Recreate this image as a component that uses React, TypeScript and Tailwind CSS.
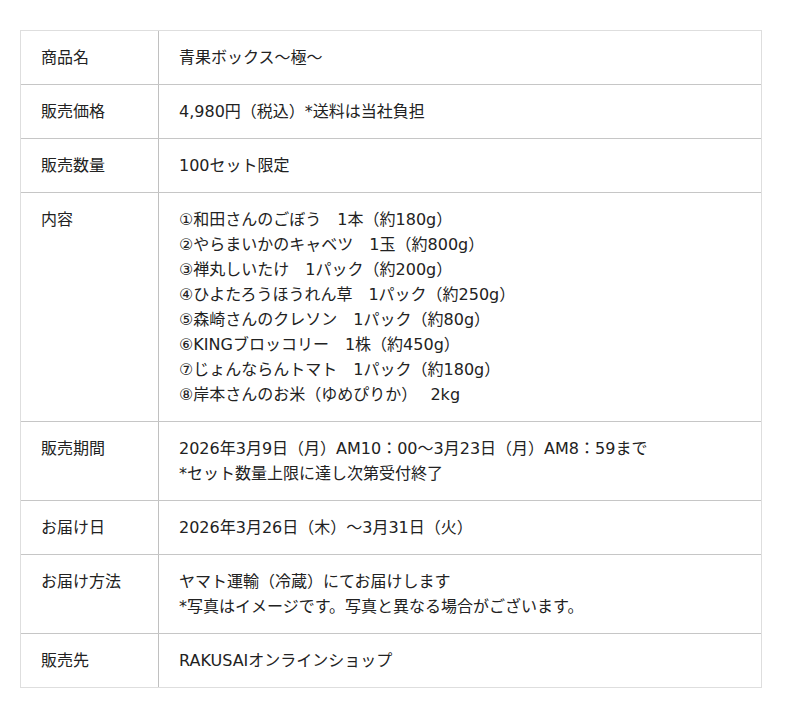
import React from "react";

type Row = { label: string; lines: string[] };

const rows: Row[] = [
  { label: "商品名", lines: ["青果ボックス〜極〜"] },
  { label: "販売価格", lines: ["4,980円（税込）*送料は当社負担"] },
  { label: "販売数量", lines: ["100セット限定"] },
  {
    label: "内容",
    lines: [
      "①和田さんのごぼう　1本（約180g）",
      "②やらまいかのキャベツ　1玉（約800g）",
      "③禅丸しいたけ　1パック（約200g）",
      "④ひよたろうほうれん草　1パック（約250g）",
      "⑤森崎さんのクレソン　1パック（約80g）",
      "⑥KINGブロッコリー　1株（約450g）",
      "⑦じょんならんトマト　1パック（約180g）",
      "⑧岸本さんのお米（ゆめぴりか）　 2kg",
    ],
  },
  {
    label: "販売期間",
    lines: [
      "2026年3月9日（月）AM10：00〜3月23日（月）AM8：59まで",
      "*セット数量上限に達し次第受付終了",
    ],
  },
  { label: "お届け日", lines: ["2026年3月26日（木）〜3月31日（火）"] },
  {
    label: "お届け方法",
    lines: [
      "ヤマト運輸（冷蔵）にてお届けします",
      "*写真はイメージです。写真と異なる場合がございます。",
    ],
  },
  { label: "販売先", lines: ["RAKUSAIオンラインショップ"] },
];

export default function App() {
  return (
    <div
      className="min-h-[718px] bg-white pt-[30px] pl-[20px] text-[16px] leading-[25px] text-[#222]"
      style={{ fontFamily: '"DejaVu Sans", "Noto Sans CJK JP", sans-serif' }}
    >
      <div className="w-[742px] border border-[#dedede]">
        {rows.map((row, i) => (
          <div
            key={row.label}
            className={
              i === 0 ? "flex" : "flex border-t border-[#c6c6c6]"
            }
          >
            <div className="w-[138px] shrink-0 border-r border-[#c0c0c0] px-[20px] py-[14px]">
              {row.label}
            </div>
            <div className="flex-1 px-[20px] py-[14px]">
              {row.lines.map((line) => (
                <div key={line} className="whitespace-pre">
                  {line}
                </div>
              ))}
            </div>
          </div>
        ))}
      </div>
    </div>
  );
}
